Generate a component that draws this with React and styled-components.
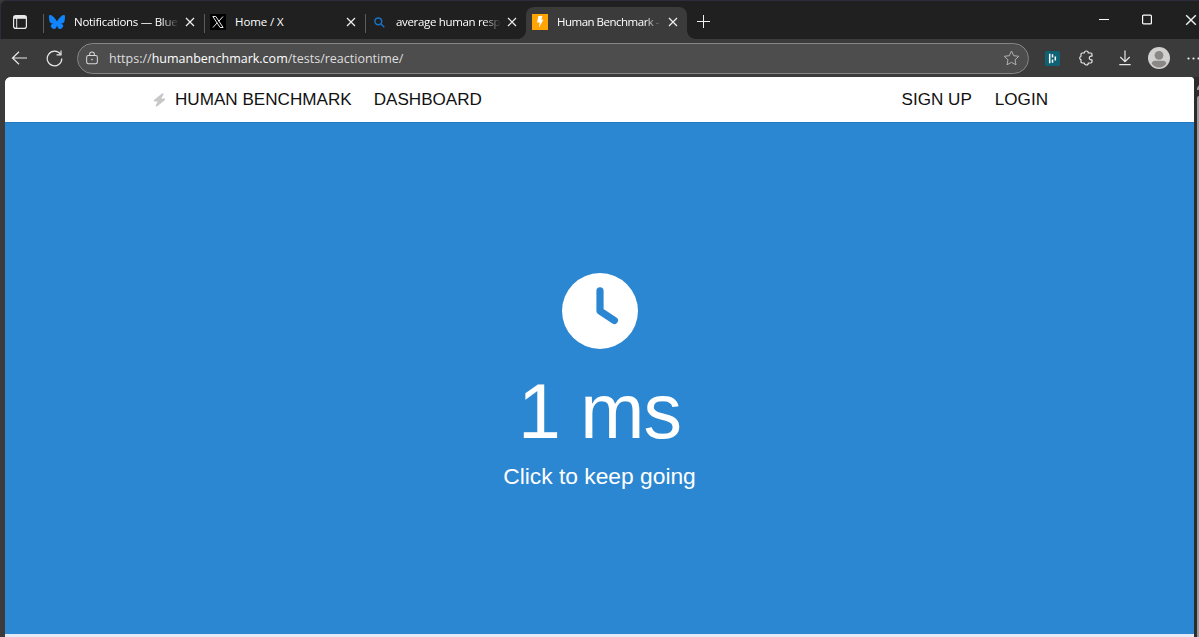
import React from 'react';
import styled, { createGlobalStyle } from 'styled-components';

const GlobalStyle = createGlobalStyle`
  * {
    box-sizing: border-box;
  }
  body {
    margin: 0;
    overflow: hidden;
    background: #3b3b3b;
  }
  svg {
    display: block;
    flex: none;
  }
`;

const Browser = styled.div`
  width: 1199px;
  height: 637px;
  display: flex;
  flex-direction: column;
  overflow: hidden;
  background: #3b3b3b;
  color: #fff;
  font-family: 'Open Sans', 'Noto Sans', sans-serif;
`;

const TabStrip = styled.div`
  height: 39px;
  flex: none;
  display: flex;
  background: #202020;
  border-top: 1px solid #2d2b3c;
  border-left: 1px solid #2d2b3c;
  border-top-left-radius: 6px;
`;

const TabActions = styled.div`
  width: 42px;
  padding: 14px 0 0 12px;
`;

const Tab = styled.div`
  position: relative;
  width: 161px;
  height: ${props => (props.$active ? '32px' : '38px')};
  margin-top: ${props => (props.$active ? '6px' : '0')};
  padding: ${props => (props.$active ? '0 0 2px 6px' : '4px 0 0 6px')};
  display: flex;
  align-items: center;
  background: ${props => (props.$active ? '#3b3b3b' : 'transparent')};
  border-radius: 8px 8px 0 0;

  &::before {
    content: '';
    display: ${props => (props.$active ? 'none' : 'block')};
    position: absolute;
    left: 0;
    top: 13px;
    width: 1px;
    height: 19px;
    background: #5c5c5c;
  }
`;

const TabCurve = styled.span`
  position: absolute;
  bottom: 0;
  width: 8px;
  height: 8px;
  ${props => props.$side}: -8px;
  background: radial-gradient(
    circle at ${props => (props.$side === 'left' ? '0 0' : '100% 0')},
    transparent 7.5px,
    #3b3b3b 8px
  );
`;

const TabTitle = styled.span`
  width: 105px;
  margin-left: ${props => props.$gap || 9}px;
  white-space: nowrap;
  font-size: 11.5px;
  font-weight: 500;
  line-height: 18px;
  letter-spacing: ${props => props.$spacing || 0}px;
  mask-image: ${props => (props.$fade ? 'linear-gradient(to right, #000 83%, transparent 100%)' : 'none')};
`;

const TabClose = styled.span`
  margin-left: 6px;
`;

const NewTab = styled.div`
  padding: 14px 0 0 10px;
`;

const WindowControls = styled.div`
  margin-left: auto;
  display: flex;
  gap: 33px;
  padding-top: 13px;
  margin-right: 2px;
`;

const Toolbar = styled.div`
  height: 38px;
  flex: none;
  display: flex;
  align-items: center;
  padding-left: 11px;
  overflow: hidden;
`;

const ToolButton = styled.span`
  display: flex;
  flex: none;
  margin-left: ${props => props.$gap || 0}px;
`;

const AddressBar = styled.div`
  width: 952px;
  height: 31px;
  flex: none;
  margin-left: 14px;
  padding: 0 8px 0 8px;
  display: flex;
  align-items: center;
  background: #4d4d4d;
  border: 1px solid #868686;
  border-radius: 16px;
`;

const Url = styled.span`
  flex: 1;
  margin-left: 11px;
  font-size: 12.5px;
  color: #dedede;

  b {
    font-weight: 400;
    color: #fff;
  }
`;

const Divider = styled.span`
  width: 1px;
  height: 15px;
  margin-left: 11px;
  background: #5c5c5c;
`;

const Viewport = styled.div`
  flex: 1;
  display: flex;
  padding-left: 5px;
`;

const Page = styled.div`
  width: 1189px;
  display: flex;
  flex-direction: column;
  background: #e6e8f4;
  border-radius: 6px 4px 0 0;
  overflow: hidden;
  font-family: 'Liberation Sans', Arial, sans-serif;
`;

const Scrollbar = styled.div`
  width: 5px;
  display: flex;
  flex-direction: column;
  align-items: flex-end;
  background: #2c2c2c;

  svg {
    margin: 8px 0 6px;
  }
`;

const Thumb = styled.div`
  width: 2px;
  flex: 1;
  background: #9b9b9b;
  border-top-left-radius: 2px;
`;

const Nav = styled.nav`
  height: 45px;
  flex: none;
  display: flex;
  align-items: center;
  padding: 0 146px 0 148px;
  background: #fff;
`;

const NavLink = styled.a`
  display: flex;
  align-items: center;
  margin-left: ${props => (props.$right ? 'auto' : `${props.$gap || 0}px`)};
  font-size: 17.1px;
  line-height: 20px;
  color: #111;

  svg {
    margin-right: 9px;
  }
`;

const Test = styled.main`
  height: 512px;
  flex: none;
  display: flex;
  flex-direction: column;
  align-items: center;
  padding-top: 151px;
  background: #2b87d1;
  box-shadow: inset 0 2px 1px -1px #2479be;
`;

const Score = styled.h1`
  margin: 19px 0 0;
  font-size: 77px;
  font-weight: 400;
  line-height: 86px;
  letter-spacing: -1px;
`;

const Hint = styled.p`
  margin: 9px 0 0;
  font-size: 22.8px;
  line-height: 27px;
`;

const CloseIcon = ({ size = 10 }) => (
  <svg width={size} height={size} viewBox="0 0 10 10" stroke="#f0f0f0" strokeWidth="1.2">
    <path d="M1 1l8 8M9 1L1 9" />
  </svg>
);

const TabsIcon = () => (
  <svg width="14" height="14" viewBox="0 0 14 14" fill="none" stroke="#e8e8e8">
    <rect x="0.6" y="0.6" width="12.8" height="12.8" rx="2.2" strokeWidth="1.2" />
    <path d="M1 2.4h12" strokeWidth="2.8" />
    <path d="M3.7 3v10" strokeWidth="1" />
  </svg>
);

const ButterflyIcon = () => (
  <svg width="16" height="16" viewBox="0 0 24 24" fill="#1185fe">
    <path d="M5.2 2.9C8 5 11 9.2 12 11.4c1-2.2 4-6.4 6.8-8.5C20.8 1.4 24 .2 24 3.9c0 .7-.4 6.1-.7 7-.9 3-4 3.8-6.8 3.3 4.9.8 6.2 3.6 3.5 6.4-5.1 5.3-7.4-1.3-8-3-.6 1.7-2.9 8.3-8 3-2.7-2.8-1.4-5.6 3.5-6.4-2.8.5-5.9-.3-6.8-3.3C.4 10 0 4.6 0 3.9 0 .2 3.2 1.4 5.2 2.9z" />
  </svg>
);

const XIcon = () => (
  <svg width="16" height="16" viewBox="0 0 16 16">
    <rect width="16" height="16" fill="#000" />
    <path d="M2.8 2.5h3l7.3 11h-3zM13 2.5L8.7 7.4M7.2 8.8L3 13.5" fill="none" stroke="#e6e6e6" />
  </svg>
);

const SearchIcon = () => (
  <svg width="11" height="11" viewBox="0 0 11 11" fill="none" stroke="#1673c7" strokeWidth="1.5">
    <circle cx="4.3" cy="4.3" r="3.4" />
    <path d="M6.8 6.8L10.3 10.3" />
  </svg>
);

const BoltTile = () => (
  <svg width="16" height="16" viewBox="0 0 16 16">
    <rect width="16" height="16" fill="#ffa400" />
    <path d="M6.4 2h4L9.4 5.7h2L6.9 13.8l.8-5.3H5z" fill="#fff" />
  </svg>
);

const BackIcon = () => (
  <svg width="17" height="14" viewBox="0 0 17 14" fill="none" stroke="#e8e8e8" strokeWidth="1.2">
    <path d="M16 7H1.5M8 .8L1.5 7 8 13.2" />
  </svg>
);

const ReloadIcon = () => (
  <svg width="17" height="17" viewBox="0 0 17 17" fill="none" stroke="#e8e8e8" strokeWidth="1.2">
    <path d="M14.6 4.5A7.3 7.3 0 1 0 15.8 8.5" />
    <path d="M15 .6v4.2h-4.4" />
  </svg>
);

const LockIcon = () => (
  <svg width="12" height="14" viewBox="0 0 13 14" fill="none" stroke="#d8d8d8" strokeWidth="1.1">
    <rect x="0.7" y="4.3" width="11.6" height="8.9" rx="1.8" />
    <path d="M3.9 4.3V3.1a2.6 2.6 0 0 1 5.2 0v1.2" />
    <circle cx="6.5" cy="8.7" r="0.9" fill="#d8d8d8" stroke="none" />
  </svg>
);

const StarIcon = () => (
  <svg width="17" height="16" viewBox="0 0 17 16" fill="none" stroke="#b0b0b0" strokeLinejoin="round">
    <path d="M8.5 1l2.2 4.7 5.1.6-3.8 3.5 1 5-4.5-2.5L4 14.8l1-5L1.2 6.3l5.1-.6z" />
  </svg>
);

const ExtensionIcon = () => (
  <svg width="15" height="15" viewBox="0 0 15 15">
    <rect width="15" height="15" rx="1.5" fill="#0e6274" />
    <path d="M4.7 2.8v9.4M7.5 3.2v3.3M7.5 8.5v3.3M10.3 5.5v4" stroke="#fff" strokeWidth="1.5" />
  </svg>
);

const PuzzleIcon = () => (
  <svg width="15" height="16" viewBox="0 0 15 16" fill="none" stroke="#e8e8e8" strokeWidth="1.2" strokeLinejoin="round">
    <path d="M3.2 3h2.1a2 2 0 0 1 4 0h2.5q1.2 0 1.2 1.2v1.9h-.8a1.9 1.9 0 1 0 0 3.8h.8v1.9q0 1.2-1.2 1.2H9.3a2 2 0 0 1-4 0H3.2Q2 13 2 11.8V9.8a1.9 1.9 0 0 1 0-3.6v-2Q2 3 3.2 3z" />
  </svg>
);

const DownloadIcon = () => (
  <svg width="12" height="16" viewBox="0 0 12 16" fill="none" stroke="#e8e8e8" strokeWidth="1.2">
    <path d="M6 .5v11M1.3 7L6 11.6 10.7 7M.3 14.7h11.4" />
  </svg>
);

const Avatar = () => (
  <svg width="22" height="22" viewBox="0 0 22 22">
    <circle cx="11" cy="11" r="11" fill="#d2d0ce" />
    <circle cx="11" cy="8.3" r="4.4" fill="#8a8886" />
    <path d="M3.7 16.7q.4-2.9 3.2-2.9h8.2q2.8 0 3.2 2.9a9 9 0 0 1-14.6 0z" fill="#8a8886" />
  </svg>
);

const MoreIcon = () => (
  <svg width="14" height="3" viewBox="0 0 14 3" fill="#f0f0f0">
    <circle cx="1.5" cy="1.5" r="1.1" />
    <circle cx="6.5" cy="1.5" r="1.1" />
    <circle cx="11.5" cy="1.5" r="1.1" />
  </svg>
);

const NavBolt = () => (
  <svg width="13" height="14" viewBox="0 0 13 14" fill="#c8c8c8">
    <path d="M9.3.2L1 7q-.9 1.1.4 1.6h3.3L2.7 12.5q-.2 1.4 1.3 1L12 7q.8-1.1-.5-1.6H8.3l2.3-4.2Q10.7 0 9.3.2z" />
  </svg>
);

const ClockIcon = () => (
  <svg width="76" height="76" viewBox="0 0 76 76">
    <circle cx="38" cy="38" r="38" fill="#fff" />
    <path d="M38 17.8V38l14.4 9.5" fill="none" stroke="#2b87d1" strokeWidth="7.2" strokeLinecap="round" strokeLinejoin="round" />
  </svg>
);

const tabs = [
  { title: 'Notifications — Blue', icon: <ButterflyIcon />, fade: true, spacing: -0.28 },
  { title: 'Home / X', icon: <XIcon />, spacing: -0.1 },
  { title: 'average human resp', icon: <SearchIcon />, gap: 11, fade: true, spacing: -0.33 },
  { title: 'Human Benchmark -', icon: <BoltTile />, active: true, fade: true, spacing: -0.5 },
];

export default function App() {
  return (
    <Browser>
      <GlobalStyle />
      <TabStrip>
        <TabActions>
          <TabsIcon />
        </TabActions>
        {tabs.map(tab => (
          <Tab key={tab.title} $active={tab.active}>
            {tab.active && <TabCurve $side="left" />}
            <ToolButton $gap={tab.gap ? 3 : 0}>{tab.icon}</ToolButton>
            <TabTitle $gap={tab.gap} $fade={tab.fade} $spacing={tab.spacing}>
              {tab.title}
            </TabTitle>
            <TabClose>
              <CloseIcon />
            </TabClose>
            {tab.active && <TabCurve $side="right" />}
          </Tab>
        ))}
        <NewTab>
          <svg width="13" height="13" viewBox="0 0 13 13" stroke="#f0f0f0">
            <path d="M6.5 0v13M0 6.5h13" />
          </svg>
        </NewTab>
        <WindowControls>
          <svg width="10" height="11" viewBox="0 0 10 11" stroke="#fff">
            <path d="M0 5.5h10" />
          </svg>
          <svg width="10" height="11" viewBox="0 0 10 11" fill="none" stroke="#fff" strokeWidth="1.2">
            <rect x="0.6" y="1.1" width="8.8" height="8.8" rx="1" />
          </svg>
          <CloseIcon size={12} />
        </WindowControls>
      </TabStrip>
      <Toolbar>
        <ToolButton>
          <BackIcon />
        </ToolButton>
        <ToolButton $gap={18}>
          <ReloadIcon />
        </ToolButton>
        <AddressBar>
          <LockIcon />
          <Url>
            https://<b>humanbenchmark.com</b>/tests/reactiontime/
          </Url>
          <StarIcon />
        </AddressBar>
        <ToolButton $gap={16}>
          <ExtensionIcon />
        </ToolButton>
        <ToolButton $gap={19}>
          <PuzzleIcon />
        </ToolButton>
        <Divider />
        <ToolButton $gap={14}>
          <DownloadIcon />
        </ToolButton>
        <ToolButton $gap={17}>
          <Avatar />
        </ToolButton>
        <ToolButton $gap={17}>
          <MoreIcon />
        </ToolButton>
      </Toolbar>
      <Viewport>
        <Page>
          <Nav>
            <NavLink>
              <NavBolt />
              HUMAN BENCHMARK
            </NavLink>
            <NavLink $gap={22}>DASHBOARD</NavLink>
            <NavLink $right>SIGN UP</NavLink>
            <NavLink $gap={23}>LOGIN</NavLink>
          </Nav>
          <Test>
            <ClockIcon />
            <Score>1 ms</Score>
            <Hint>Click to keep going</Hint>
          </Test>
        </Page>
        <Scrollbar>
          <svg width="2" height="5" viewBox="0 0 2 5" fill="#9b9b9b">
            <path d="M2 0v5H0V3z" />
          </svg>
          <Thumb />
        </Scrollbar>
      </Viewport>
    </Browser>
  );
}
